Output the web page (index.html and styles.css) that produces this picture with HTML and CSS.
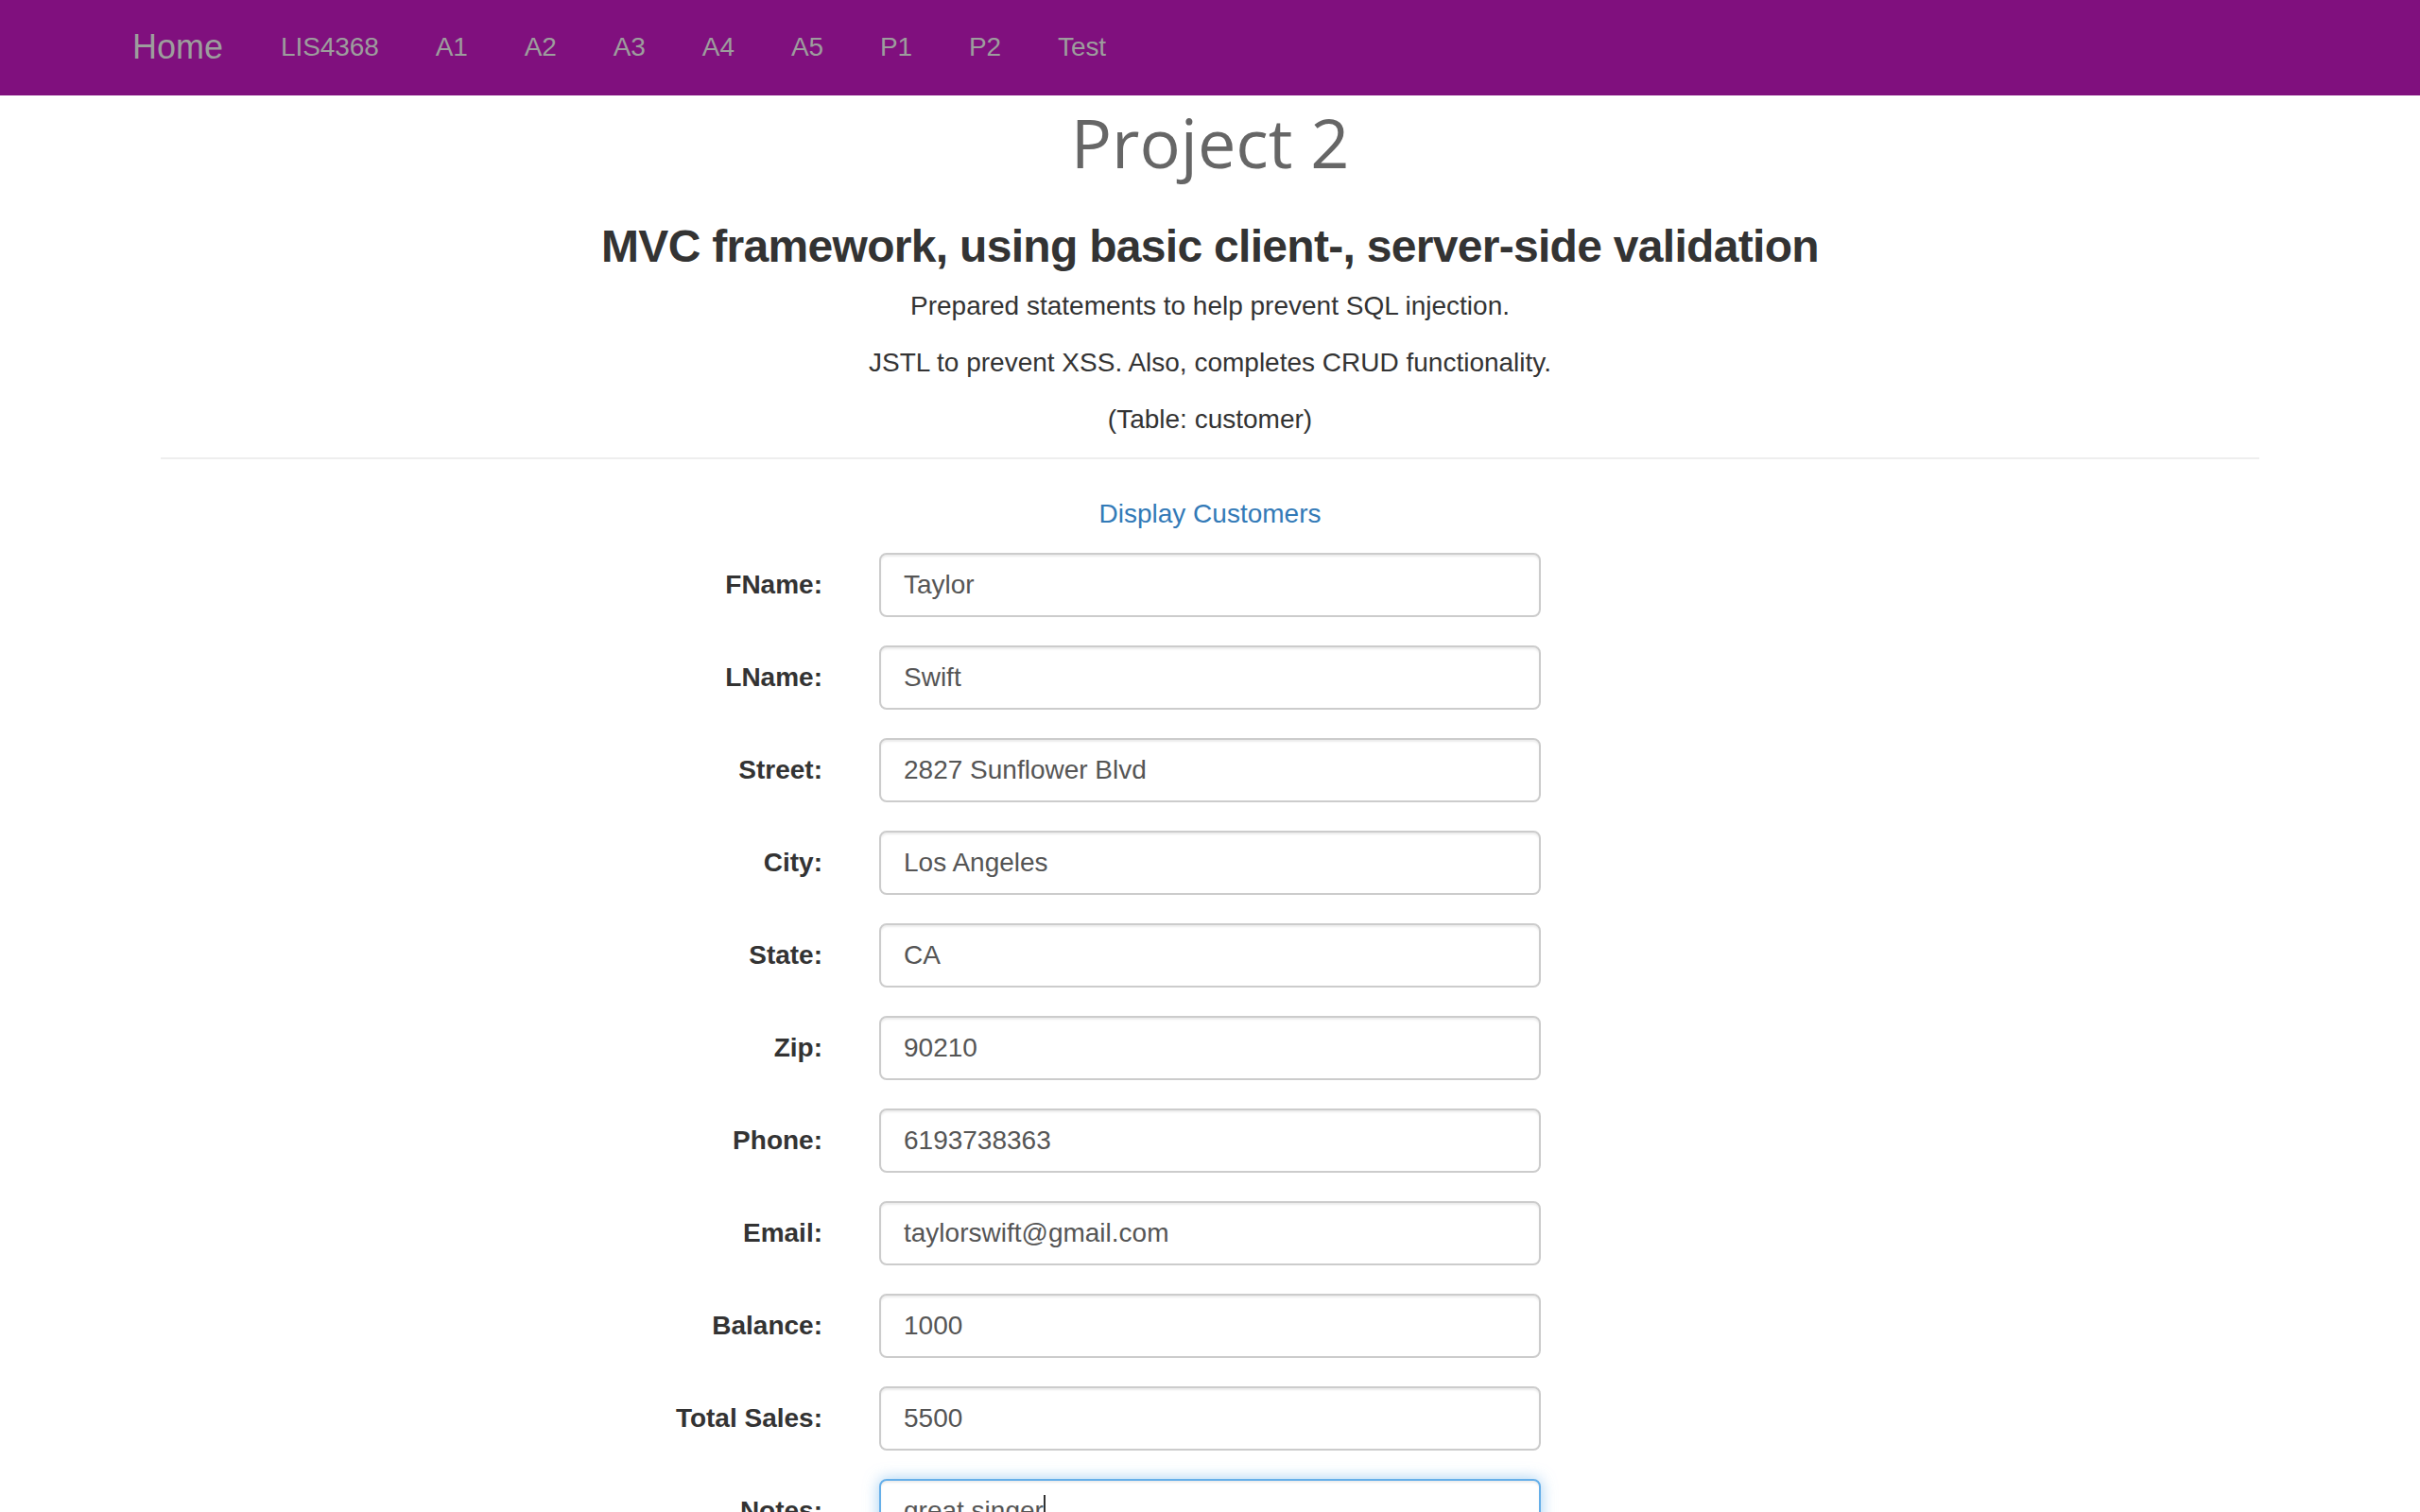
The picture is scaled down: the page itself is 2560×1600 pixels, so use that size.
FILE: index.html
```html
<!DOCTYPE html>
<html lang="en">
<head>
<meta charset="utf-8">
<title>Project 2</title>
<link rel="stylesheet" href="styles.css">
</head>
<body>
<nav class="navbar">
  <div class="nav-inner">
    <a class="brand" href="#">Home</a>
    <ul class="nav-links">
      <li><a href="#">LIS4368</a></li>
      <li><a href="#">A1</a></li>
      <li><a href="#">A2</a></li>
      <li><a href="#">A3</a></li>
      <li><a href="#">A4</a></li>
      <li><a href="#">A5</a></li>
      <li><a href="#">P1</a></li>
      <li><a href="#">P2</a></li>
      <li><a href="#">Test</a></li>
    </ul>
  </div>
</nav>
<div class="container">
  <div class="page-header">
    <h1 class="title">Project 2</h1>
    <h3 class="subtitle">MVC framework, using basic client-, server-side validation</h3>
    <p>Prepared statements to help prevent SQL injection.</p>
    <p>JSTL to prevent XSS. Also, completes CRUD functionality.</p>
    <p>(Table: customer)</p>
  </div>
  <hr class="divider">
  <p class="center"><a class="link" href="#">Display Customers</a></p>
  <form class="form-horizontal">
    <div class="form-group"><label class="control-label">FName:</label><input class="form-control" type="text" value="Taylor"></div>
    <div class="form-group"><label class="control-label">LName:</label><input class="form-control" type="text" value="Swift"></div>
    <div class="form-group"><label class="control-label">Street:</label><input class="form-control" type="text" value="2827 Sunflower Blvd"></div>
    <div class="form-group"><label class="control-label">City:</label><input class="form-control" type="text" value="Los Angeles"></div>
    <div class="form-group"><label class="control-label">State:</label><input class="form-control" type="text" value="CA"></div>
    <div class="form-group"><label class="control-label">Zip:</label><input class="form-control" type="text" value="90210"></div>
    <div class="form-group"><label class="control-label">Phone:</label><input class="form-control" type="text" value="6193738363"></div>
    <div class="form-group"><label class="control-label">Email:</label><input class="form-control" type="text" value="taylorswift@gmail.com"></div>
    <div class="form-group"><label class="control-label">Balance:</label><input class="form-control" type="text" value="1000"></div>
    <div class="form-group"><label class="control-label">Total Sales:</label><input class="form-control" type="text" value="5500"></div>
    <div class="form-group"><label class="control-label">Notes:</label><div class="form-control focused">great singer<span class="caret"></span></div></div>
  </form>
</div>
</body>
</html>
```
FILE: styles.css
```css
* { box-sizing: border-box; }
html, body { margin: 0; padding: 0; }
body {
  font-family: "Liberation Sans", Arial, sans-serif;
  font-size: 28px;
  line-height: 40px;
  color: #333;
  background: #fff;
  overflow: hidden;
}
a { text-decoration: none; }

.navbar {
  background: #80107e;
  height: 101px;
}
.nav-inner {
  width: 2340px;
  margin: 0 auto;
  display: flex;
  align-items: flex-start;
}
.brand {
  display: block;
  padding: 30px 30px 0;
  font-size: 36px;
  line-height: 40px;
  color: #9d9d9d;
}
.nav-links {
  display: flex;
  list-style: none;
  margin: 0 0 0 1px;
  padding: 0;
}
.nav-links a {
  display: block;
  padding: 30px 30px;
  line-height: 40px;
  font-size: 28px;
  letter-spacing: -0.1px;
  color: #9d9d9d;
}

.container {
  width: 2340px;
  margin: 0 auto;
  padding: 0 60px;
}
.page-header { text-align: center; }
.title {
  font-family: "Open Sans", "Liberation Sans", sans-serif;
  font-weight: 400;
  font-size: 72px;
  line-height: 79px;
  color: #666;
  margin: 10px 0 0;
}
.subtitle {
  font-size: 48px;
  line-height: 53px;
  font-weight: 700;
  letter-spacing: -0.7px;
  color: #333;
  margin: 44px 0 17px;
}
.page-header p { margin: 0 0 20px; }
.divider {
  border: 0;
  border-top: 2px solid #eee;
  margin: 20px 0 38px;
}
.center { text-align: center; margin: 0 0 21px; }
.link { color: #337ab7; }

.form-horizontal { margin: 0; }
.form-group {
  display: flex;
  margin-bottom: 30px;
}
.control-label {
  width: 700px;
  margin-right: 60px;
  padding-top: 14px;
  text-align: right;
  font-weight: 700;
  color: #333;
  line-height: 40px;
}
.form-control {
  width: 700px;
  height: 68px;
  padding: 12px 24px;
  font-family: "Liberation Sans", Arial, sans-serif;
  font-size: 28px;
  line-height: 40px;
  color: #555;
  background: #fff;
  border: 2px solid #ccc;
  border-radius: 8px;
  box-shadow: inset 0 2px 2px rgba(0,0,0,.075);
  outline: none;
}
.form-control.focused {
  border-color: #66afe9;
  box-shadow: inset 0 2px 2px rgba(0,0,0,.075), 0 0 16px rgba(102,175,233,.6);
}
.caret {
  display: inline-block;
  width: 2px;
  height: 32px;
  background: #333;
  vertical-align: -6px;
}
```
